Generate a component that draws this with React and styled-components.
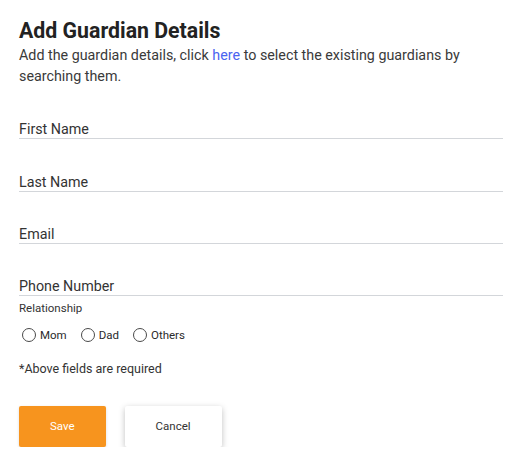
import React from "react";
import styled, { createGlobalStyle } from "styled-components";

const Global = createGlobalStyle`
  html, body { margin: 0; padding: 0; background: #fff; }
  body { font-family: Roboto, "Noto Sans", Arial, sans-serif; color: #333; }
  * { box-sizing: border-box; }
`;

const Page = styled.div`
  width: 518px;
  padding: 18px 15px 0 19px;
`;

const Title = styled.h1`
  margin: 0 0 1px;
  font-size: 21.3px;
  line-height: 26px;
  font-weight: 700;
  color: #222;
`;

const Intro = styled.p`
  margin: 0;
  font-size: 14.3px;
  line-height: 21px;
  color: #3a3a3a;
`;

const Link = styled.a`
  color: #4a63f0;
  text-decoration: none;
`;

const Field = styled.div`
  padding-top: 34.33px;
  border-bottom: 1px solid #d3d6da;
`;

const FieldLabel = styled.label`
  display: block;
  font-size: 14.3px;
  line-height: 17px;
  color: #333;
`;

const SmallText = styled.div`
  font-size: ${(p) => p.$size}px;
  line-height: ${(p) => p.$lh}px;
  color: #333;
  margin-top: ${(p) => p.$top}px;
`;

const RadioRow = styled.div`
  display: flex;
  align-items: center;
  height: 20px;
  margin-top: 10px;
  padding-left: 3px;
  gap: 14px;
`;

const RadioItem = styled.label`
  display: flex;
  align-items: center;
  gap: 4px;
  font-size: 11.5px;
  line-height: 14px;
  color: #2a2a2a;
`;

const Circle = styled.span`
  width: 14px;
  height: 14px;
  border-radius: 50%;
  border: 1px solid #4a4a4a;
  background: #fff;
`;

const Buttons = styled.div`
  display: flex;
  gap: 19px;
  margin-top: 29.5px;
`;

const Button = styled.button`
  height: 41.5px;
  padding: 0 31px;
  border: none;
  border-radius: 2px;
  font-family: Roboto, "Noto Sans", Arial, sans-serif;
  font-size: 11.5px;
  background: ${(p) => (p.$primary ? "#f7941e" : "#fff")};
  color: ${(p) => (p.$primary ? "#fff" : "#333")};
  box-shadow: ${(p) =>
    p.$primary ? "0 1px 3px rgba(0,0,0,0.14)" : "0 2px 6px rgba(0,0,0,0.25)"};
`;

const fields = ["First Name", "Last Name", "Email", "Phone Number"];
const relations = ["Mom", "Dad", "Others"];

export default function App() {
  return (
    <>
      <Global />
      <Page>
        <Title>Add Guardian Details</Title>
        <Intro>
          Add the guardian details, click <Link href="#">here</Link> to select the
          existing guardians by searching them.
        </Intro>
        {fields.map((f) => (
          <Field key={f}>
            <FieldLabel>{f}</FieldLabel>
          </Field>
        ))}
        <SmallText $size={11.5} $lh={14} $top={4.7}>
          Relationship
        </SmallText>
        <RadioRow>
          {relations.map((r) => (
            <RadioItem key={r}>
              <Circle />
              {r}
            </RadioItem>
          ))}
        </RadioRow>
        <SmallText $size={12.5} $lh={15} $top={16}>
          *Above fields are required
        </SmallText>
        <Buttons>
          <Button $primary>Save</Button>
          <Button>Cancel</Button>
        </Buttons>
      </Page>
    </>
  );
}
